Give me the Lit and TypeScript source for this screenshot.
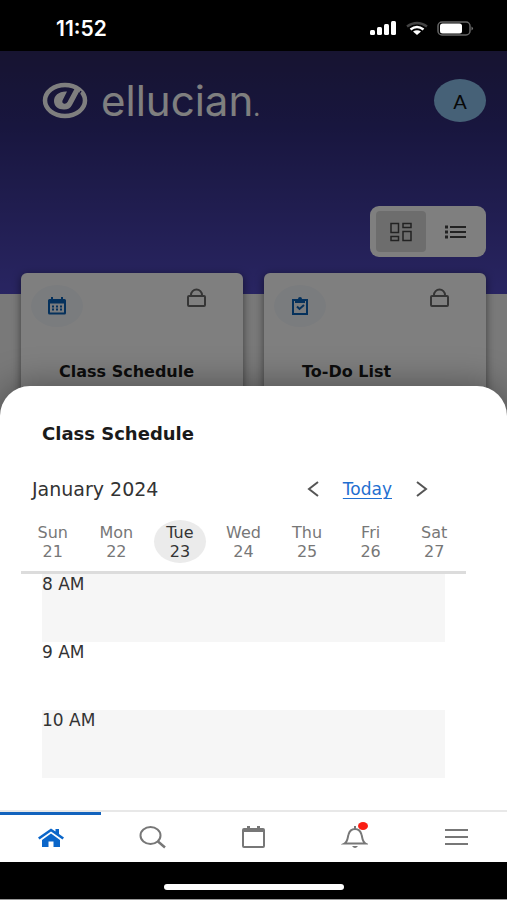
import { LitElement, html, css, svg, nothing } from "lit";
import { customElement, property, state } from "lit/decorators.js";
import { classMap } from "lit/directives/class-map.js";

const lock = html`<svg class="lock" width="20" height="20" viewBox="0 0 20 20" fill="none" stroke="#6b6b6b" stroke-width="2" aria-hidden="true">
  <rect x="1" y="8" width="17" height="10" rx="1"></rect>
  <path d="M4 8V7a5.500 5.500 0 0 1 11 0v1"></path>
</svg>`;

const calendarBadge = html`<svg width="20" height="20" viewBox="0 0 20 20" aria-hidden="true">
  <path fill="#0b62b8" fill-rule="evenodd" d="M4 1h2v2h8V1h2v2h1.500a1.500 1.500 0 0 1 1.500 1.500v12.500a1.500 1.500 0 0 1-1.500 1.500h-15a1.500 1.500 0 0 1-1.500-1.500V4.500A1.500 1.500 0 0 1 2.500 3H4zM3 7.500V16.500h14V7.500z"></path>
  <path stroke="#0b62b8" stroke-width="2" stroke-dasharray="2 2" d="M5 10.500h10M5 13.500h10"></path>
</svg>`;

const taskBadge = html`<svg width="20" height="20" viewBox="0 0 20 20" fill="none" stroke="#0b62b8" stroke-width="2" aria-hidden="true">
  <rect x="3" y="4" width="14" height="14"></rect>
  <path d="M7 10.500l2.500 2.500L14 9"></path>
  <path fill="#0b62b8" stroke="none" d="M5 3h3a2 2 0 0 1 4 0h3v4H5z"></path>
</svg>`;

@customElement("status-bar")
class StatusBar extends LitElement {
  static styles = css`
    :host {
      display: flex;
      align-items: center;
      justify-content: space-between;
      height: 51px;
      padding: 6px 33px 0 56px;
      box-sizing: border-box;
      background: #000;
      color: #fff;
      font: 600 21px/24px Inter, sans-serif;
    }
    .signals { display: flex; align-items: center; gap: 9px; }
  `;
  render() {
    return html`<time>11:52</time>
      <div class="signals">
        <svg width="28" height="15" viewBox="0 0 28 15" fill="#fff" aria-label="Cellular signal">
          <rect x="1" y="9" width="5" height="5" rx="1.500"></rect>
          <rect x="8" y="6" width="5" height="8" rx="1.500"></rect>
          <rect x="15" y="3" width="5" height="11" rx="1.500"></rect>
          <rect x="22" y="0" width="5" height="14" rx="1.500"></rect>
        </svg>
        <svg width="22" height="15" viewBox="0 0 22 15" fill="none" stroke="#fff" stroke-width="2.500" aria-label="Wi-Fi">
          <path stroke="#444" d="M1 5.500Q11-1.500 21 5.500"></path>
          <path d="M4.500 8.500Q11 3.500 17.500 8.500"></path>
          <path fill="#fff" stroke="none" d="M7 10.500Q11 8 15 10.500L11 14z"></path>
        </svg>
        <svg width="37" height="15" viewBox="0 0 37 15" aria-label="Battery">
          <rect x="1" y="1" width="32" height="13" rx="4" fill="none" stroke="#666" stroke-width="1.500"></rect>
          <rect x="3" y="2.500" width="22" height="10" rx="2.500" fill="#fff"></rect>
          <path d="M34.500 5.500q3 2 0 4z" fill="#777"></path>
        </svg>
      </div>`;
  }
}

@customElement("dashboard-card")
class DashboardCard extends LitElement {
  @property() heading = "";
  @property({ attribute: false }) icon: unknown = nothing;
  static styles = css`
    :host {
      display: block;
      min-height: 200px;
      padding: 12px 10px;
      box-sizing: border-box;
      border-radius: 6px;
      background: #fff;
      box-shadow: 0 2px 8px rgba(0, 0, 0, 0.5);
    }
    .top { display: flex; justify-content: space-between; align-items: flex-start; padding-right: 26px; }
    .badge {
      display: grid;
      place-items: center;
      width: 52px;
      height: 42px;
      border-radius: 50%;
      background: #f5f8fc;
    }
    .lock { margin-top: 3px; }
    h2 { margin: 34px 0 0 28px; color: #1a1a1a; font: bold 16px/22px "DejaVu Sans", sans-serif; white-space: nowrap; }
  `;
  render() {
    return html`<div class="top"><span class="badge">${this.icon}</span>${lock}</div>
      <h2>${this.heading}</h2>`;
  }
}

@customElement("schedule-sheet")
class ScheduleSheet extends LitElement {
  @state() private selected = 23;
  private days: [string, number][] = [
    ["Sun", 21], ["Mon", 22], ["Tue", 23], ["Wed", 24], ["Thu", 25], ["Fri", 26], ["Sat", 27],
  ];
  private hours = ["8 AM", "9 AM", "10 AM"];
  static styles = css`
    :host {
      display: block;
      padding: 36px 41px 32px 21px;
      border-radius: 30px 30px 0 0;
      background: #fff;
      box-shadow: 0 0 36px rgba(0, 0, 0, 0.4);
      color: #333;
      font: 17px/20px "DejaVu Sans", sans-serif;
    }
    button { padding: 0; border: 0; background: none; color: inherit; font: inherit; cursor: pointer; }
    h1 { margin: 0 0 0 21px; color: #1a1a1a; font: bold 18px/24px "DejaVu Sans", sans-serif; }
    .month { display: flex; align-items: center; margin-top: 27px; padding: 0 34px 0 11px; height: 32px; }
    h2 { flex: 1; margin: 0; font: 19px/24px "DejaVu Sans", sans-serif; white-space: nowrap; }
    .step { display: grid; place-items: center; width: 20px; height: 32px; }
    .today { margin: 0 20px; color: #1f6fd0; text-decoration: underline; text-decoration-thickness: 1px; text-underline-offset: 3px; }
    .week { display: grid; grid-template-columns: repeat(7, 1fr); justify-items: center; margin-top: 15px; padding-bottom: 8px; border-bottom: 3px solid #dcdcdc; color: #777; }
    .day { display: flex; flex-direction: column; align-items: center; justify-content: center; width: 52px; height: 43px; border-radius: 50%; font-size: 16px; line-height: 19px; }
    .chosen { background: #ebebeb; color: #333; }
    ol { margin: 0; padding: 0 21px; list-style: none; }
    li { height: 68px; }
    li:nth-child(odd) { background: #f6f6f6; }
  `;
  render() {
    return html`<h1>Class Schedule</h1>
      <div class="month">
        <h2>January 2024</h2>
        <button class="step" aria-label="Previous week">
          <svg width="14" height="16" viewBox="0 0 14 16" fill="none" stroke="#555" stroke-width="2"><path d="M12 1L3 8l9 7"></path></svg>
        </button>
        <button class="today" @click=${() => (this.selected = 23)}>Today</button>
        <button class="step" aria-label="Next week">
          <svg width="14" height="16" viewBox="0 0 14 16" fill="none" stroke="#555" stroke-width="2"><path d="M2 1l9 7-9 7"></path></svg>
        </button>
      </div>
      <div class="week">
        ${this.days.map(([name, date]) => html`<button
          class=${classMap({ day: true, chosen: date === this.selected })}
          aria-pressed=${date === this.selected}
          @click=${() => (this.selected = date)}
        ><span>${name}</span><span>${date}</span></button>`)}
      </div>
      <ol>${this.hours.map((hour) => html`<li>${hour}</li>`)}</ol>`;
  }
}

@customElement("tab-bar")
class TabBar extends LitElement {
  private tabs = [
    { label: "Home", art: svg`<g fill="#0b66c9"><path d="M14 7.500l9 6.500V21h-6.500v-5.500h-5V21H5v-7z"></path><path d="M14 2.500l4.500 3V3H22v5l5 3.500-1.500 2L14 5.500 2.500 13.500 1 11.500z"></path></g>` },
    { label: "Search", art: svg`<g fill="none" stroke="#777" stroke-width="2"><ellipse cx="11.500" cy="9.500" rx="10" ry="8.500"></ellipse><path stroke-width="2.500" d="M19 15.500l7 6"></path></g>` },
    { label: "Calendar", art: svg`<g fill="none" stroke="#777" stroke-width="2"><rect x="3" y="3" width="21" height="18" rx="1"></rect><path stroke-width="3" d="M3 4.500h21"></path><path stroke-width="3" d="M8.500 0v4M18.500 0v4"></path></g>` },
    { label: "Notifications", art: svg`<g fill="none" stroke="#777" stroke-width="2"><path d="M3.500 17.500c3.500-2 3-6 4-9C8.500 5 11 3 14 3s5.500 2 6.500 5.500c1 3 .5 7 4 9z"></path><path d="M14 0v3"></path><path fill="#777" stroke="none" d="M11 20h6q-3 4-6 0z"></path></g>` },
    { label: "Menu", art: svg`<path stroke="#777" stroke-width="2" d="M2 4h23M2 11h23M2 18h23"></path>` },
  ];
  static styles = css`
    :host { display: block; background: #fff; }
    nav { display: grid; grid-template-columns: repeat(5, 1fr); border-top: 2px solid #e8e8e8; }
    a { display: grid; place-items: center; height: 50px; padding-bottom: 2px; box-sizing: border-box; border-top: 3px solid transparent; }
    a.current { border-color: #1263bd; }
    .glyph { position: relative; display: flex; }
    .alert { position: absolute; top: -4px; right: 0; width: 10px; height: 8px; border-radius: 50%; background: #fa1e14; }
  `;
  render() {
    return html`<nav>${this.tabs.map((tab, i) => html`<a href="#${tab.label.toLowerCase()}" aria-label=${tab.label} class=${classMap({ current: i === 0 })}>
      <span class="glyph"><svg width="27" height="23" viewBox="0 0 27 23">${tab.art}</svg>${i === 3 ? html`<span class="alert"></span>` : nothing}</span>
    </a>`)}</nav>`;
  }
}

@customElement("app-root")
class AppRoot extends LitElement {
  static styles = css`
    :host { display: flex; flex-direction: column; min-height: 100vh; background: #fff; }
    .stage { flex: 1; display: grid; overflow: hidden; }
    .stage > * { grid-area: 1 / 1; min-width: 0; }
    .dashboard { display: grid; grid-template-rows: auto 1fr; background: #f2f2f2; }
    .hero {
      height: 243px;
      padding: 28px 21px 0 42px;
      box-sizing: border-box;
      background: linear-gradient(#2e2862, #302c7c 30%, #524ac4);
    }
    .brand { display: flex; align-items: center; justify-content: space-between; height: 43px; }
    .logo { display: flex; align-items: center; gap: 13px; color: #fff; font: 42px/42px Inter, sans-serif; }
    .logo small { font-size: 24px; line-height: 24px; }
    .avatar { width: 52px; height: 43px; padding: 0; border: 0; border-radius: 50%; background: #8cc3ee; color: #111; font: 20px/24px Lato, sans-serif; }
    .views { display: flex; justify-content: space-between; width: 116px; height: 51px; margin: 84px 0 0 auto; padding: 5px 6px; box-sizing: border-box; border-radius: 9px; background: #fff; }
    .view { display: grid; place-items: center; width: 50px; padding: 0; border: 0; border-radius: 4px; background: none; }
    .on { background: #dadada; }
    .cards { display: grid; grid-template-columns: 1fr 1fr; align-items: start; gap: 21px; margin-top: -21px; padding: 0 21px; }
    .scrim { z-index: 1; background: rgba(0, 0, 0, 0.5); }
    schedule-sheet { z-index: 2; align-self: end; }
    .home { display: grid; place-items: center; height: 38px; padding-top: 12px; box-sizing: border-box; border-bottom: 1px solid #999; background: #000; }
    .handle { width: 180px; height: 6px; border-radius: 3px; background: #fff; }
  `;
  render() {
    return html`<status-bar></status-bar>
      <div class="stage">
        <div class="dashboard">
          <header class="hero">
            <div class="brand">
              <div class="logo">
                <svg width="46" height="37" viewBox="0 0 46 37" fill="none" stroke="#fff" aria-hidden="true">
                  <ellipse cx="23" cy="18.500" rx="20" ry="15.500" stroke-width="4.500"></ellipse>
                  <path fill="#fff" stroke="none" d="M25 9.500C17 9 12 13.500 12 19c0 5 4 8.500 10 8.500 4 0 6.500-1.500 8-4.500l7.500-14-4.500-3-7.500 14q-1.500 2.500-4 1.500-2-1-1-3z"></path>
                  <path stroke="#302b74" stroke-width="1.500" d="M39 9l-4 7"></path>
                </svg>
                <span>ellucian<small>.</small></span>
              </div>
              <button class="avatar" aria-label="Account">A</button>
            </div>
            <div class="views">
              <button class="view on" aria-label="Card view">
                <svg width="24" height="20" viewBox="0 0 24 20" fill="none" stroke="#444" stroke-width="1.500"><path d="M2 1.500h7.500v9H2zM14 1.500h8v4h-8zM2 14.500h7.500v4H2zM14 9.500h8v9h-8z"></path></svg>
              </button>
              <button class="view" aria-label="List view">
                <svg width="22" height="16" viewBox="0 0 22 16" stroke="#444" stroke-width="2"><path d="M6 3h16M6 8h16M6 13h16"></path><path stroke-width="3" d="M1 3h3M1 8h3M1 13h3"></path></svg>
              </button>
            </div>
          </header>
          <div class="cards">
            <dashboard-card heading="Class Schedule" .icon=${calendarBadge}></dashboard-card>
            <dashboard-card heading="To-Do List" .icon=${taskBadge}></dashboard-card>
          </div>
        </div>
        <div class="scrim"></div>
        <schedule-sheet></schedule-sheet>
      </div>
      <tab-bar></tab-bar>
      <div class="home"><div class="handle"></div></div>`;
  }
}
